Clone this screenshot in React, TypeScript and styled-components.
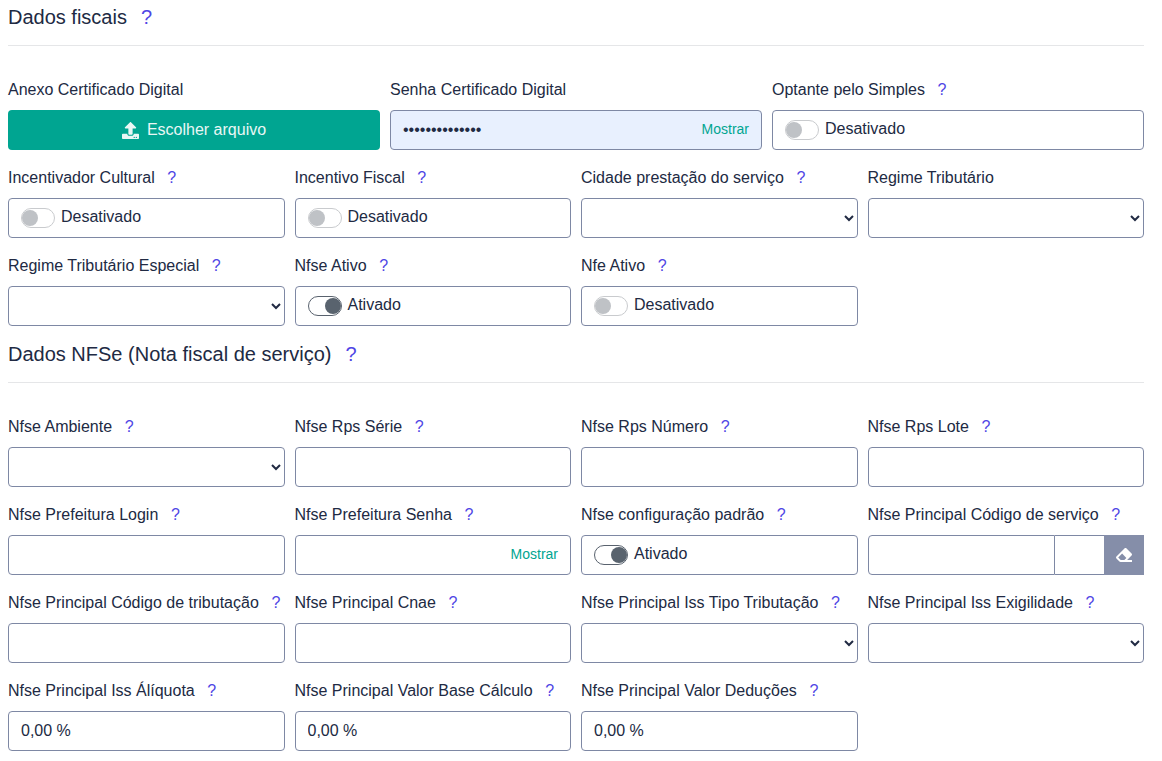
import styled, { createGlobalStyle } from "styled-components";
import { FaEraser, FaUpload } from "react-icons/fa";

const GlobalStyle = createGlobalStyle`
    html, body {
        margin: 0;
        background: #fff;
    }
    * {
        box-sizing: border-box;
    }
`;

const Page = styled.div`
    padding: 5px 18px 10px 8px;
    font-family: "Liberation Sans", Arial, sans-serif;
    font-size: 16px;
    color: #212a43;
`;

const SectionTitle = styled.h2<{ $spaced?: boolean }>`
    margin: ${(p) => (p.$spaced ? "16px" : "0")} 0 0;
    font-size: 20px;
    font-weight: 400;
    line-height: 24px;
    color: #212a43;
`;

const Divider = styled.hr`
    margin: 16px 0 31px;
    border: 0;
    border-top: 1px solid #e5e6e8;
`;

const Row = styled.div<{ $cols: number }>`
    display: grid;
    grid-template-columns: repeat(${(p) => p.$cols}, 1fr);
    column-gap: 10px;
    margin-top: 15px;
`;

const Field = styled.div`
    min-width: 0;
`;

const Label = styled.label`
    display: block;
    height: 24px;
    margin-bottom: 9px;
    padding-top: 1px;
    line-height: 24px;
    white-space: nowrap;
`;

const Help = styled.span`
    margin-left: 12.6px;
    color: #4f46e5;
`;

const TitleHelp = styled(Help)`
    margin-left: 14px;
`;

const UploadButton = styled.button`
    display: flex;
    align-items: center;
    justify-content: center;
    gap: 8px;
    width: 100%;
    height: 40px;
    border: 0;
    border-radius: 4px;
    background: #00a591;
    color: #e9f7f5;
    font: inherit;
`;

const TextInput = styled.input<{ $filled?: boolean }>`
    display: block;
    width: 100%;
    height: 40px;
    padding: 0 12px;
    border: 1px solid #7e88a4;
    border-radius: 4px;
    background: ${(p) => (p.$filled ? "#e8f0fe" : "#fff")};
    color: #212a43;
    font: inherit;
    outline: none;
`;

const Select = styled.select`
    display: block;
    width: 100%;
    height: 40px;
    padding: 0 8px;
    border: 1px solid #7e88a4;
    border-radius: 4px;
    background: #fff;
    color: #212a43;
    font: inherit;
`;

const PasswordWrap = styled.div`
    position: relative;
`;

const ShowLink = styled.a`
    position: absolute;
    top: 11px;
    right: 13px;
    color: #00a591;
    font-size: 14px;
    line-height: 16px;
`;

const SwitchBox = styled.div`
    display: flex;
    align-items: center;
    gap: 6px;
    height: 40px;
    padding-left: 12px;
    border: 1px solid #7e88a4;
    border-radius: 4px;
    background: #fff;
`;

const SwitchText = styled.span`
    padding-bottom: 2px;
`;

const Track = styled.span<{ $on?: boolean }>`
    display: flex;
    align-items: center;
    justify-content: ${(p) => (p.$on ? "flex-end" : "flex-start")};
    width: 34px;
    height: 20px;
    border: 1px solid ${(p) => (p.$on ? "#59626e" : "#c9cbce")};
    border-radius: 10px;
    background: #fff;
`;

const Knob = styled.span<{ $on?: boolean }>`
    width: 16px;
    height: 16px;
    border-radius: 50%;
    background: ${(p) => (p.$on ? "#59636e" : "#bfc2c6")};
`;

const InputGroup = styled.div`
    display: flex;
    height: 40px;
`;

const GroupMain = styled.input`
    flex: 0 0 187px;
    min-width: 0;
    border: 1px solid #7e88a4;
    border-radius: 4px 0 0 4px;
    background: #fff;
    outline: none;
`;

const GroupExtra = styled.input`
    flex: 1;
    min-width: 0;
    border: 1px solid #7e88a4;
    border-width: 1px 0;
    background: #fff;
    outline: none;
`;

const GroupButton = styled.button`
    display: flex;
    align-items: center;
    justify-content: center;
    flex: 0 0 40px;
    border: 0;
    background: #858ea9;
    color: #fff;
    padding: 0;
`;

function FieldLabel({ text, help = true }: { text: string; help?: boolean }) {
    return (
        <Label>
            {text}
            {help && <Help>?</Help>}
        </Label>
    );
}

function Toggle({ on }: { on?: boolean }) {
    return (
        <SwitchBox>
            <Track $on={on}>
                <Knob $on={on} />
            </Track>
            <SwitchText>{on ? "Ativado" : "Desativado"}</SwitchText>
        </SwitchBox>
    );
}

function InputField({ label, value }: { label: string; value?: string }) {
    return (
        <Field>
            <FieldLabel text={label} />
            <TextInput defaultValue={value} />
        </Field>
    );
}

function SelectField({ label, help }: { label: string; help?: boolean }) {
    return (
        <Field>
            <FieldLabel text={label} help={help} />
            <Select />
        </Field>
    );
}

function ToggleField({ label, on }: { label: string; on?: boolean }) {
    return (
        <Field>
            <FieldLabel text={label} />
            <Toggle on={on} />
        </Field>
    );
}

export default function App() {
    return (
        <Page>
            <GlobalStyle />
            <SectionTitle>
                Dados fiscais<TitleHelp>?</TitleHelp>
            </SectionTitle>
            <Divider />
            <Row $cols={3}>
                <Field>
                    <FieldLabel text="Anexo Certificado Digital" help={false} />
                    <UploadButton>
                        <FaUpload size={17} />
                        Escolher arquivo
                    </UploadButton>
                </Field>
                <Field>
                    <FieldLabel text="Senha Certificado Digital" help={false} />
                    <PasswordWrap>
                        <TextInput $filled type="password" defaultValue="12345678901234" />
                        <ShowLink>Mostrar</ShowLink>
                    </PasswordWrap>
                </Field>
                <ToggleField label="Optante pelo Simples" />
            </Row>
            <Row $cols={4}>
                <ToggleField label="Incentivador Cultural" />
                <ToggleField label="Incentivo Fiscal" />
                <SelectField label="Cidade prestação do serviço" />
                <SelectField label="Regime Tributário" help={false} />
            </Row>
            <Row $cols={4}>
                <SelectField label="Regime Tributário Especial" />
                <ToggleField label="Nfse Ativo" on />
                <ToggleField label="Nfe Ativo" />
            </Row>
            <SectionTitle $spaced>
                Dados NFSe (Nota fiscal de serviço)<TitleHelp>?</TitleHelp>
            </SectionTitle>
            <Divider />
            <Row $cols={4}>
                <SelectField label="Nfse Ambiente" />
                <InputField label="Nfse Rps Série" />
                <InputField label="Nfse Rps Número" />
                <InputField label="Nfse Rps Lote" />
            </Row>
            <Row $cols={4}>
                <InputField label="Nfse Prefeitura Login" />
                <Field>
                    <FieldLabel text="Nfse Prefeitura Senha" />
                    <PasswordWrap>
                        <TextInput type="password" />
                        <ShowLink>Mostrar</ShowLink>
                    </PasswordWrap>
                </Field>
                <ToggleField label="Nfse configuração padrão" on />
                <Field>
                    <FieldLabel text="Nfse Principal Código de serviço" />
                    <InputGroup>
                        <GroupMain />
                        <GroupExtra />
                        <GroupButton>
                            <FaEraser size={16} />
                        </GroupButton>
                    </InputGroup>
                </Field>
            </Row>
            <Row $cols={4}>
                <InputField label="Nfse Principal Código de tributação" />
                <InputField label="Nfse Principal Cnae" />
                <SelectField label="Nfse Principal Iss Tipo Tributação" />
                <SelectField label="Nfse Principal Iss Exigilidade" />
            </Row>
            <Row $cols={4}>
                <InputField label="Nfse Principal Iss Álíquota" value="0,00 %" />
                <InputField label="Nfse Principal Valor Base Cálculo" value="0,00 %" />
                <InputField label="Nfse Principal Valor Deduções" value="0,00 %" />
            </Row>
        </Page>
    );
}
